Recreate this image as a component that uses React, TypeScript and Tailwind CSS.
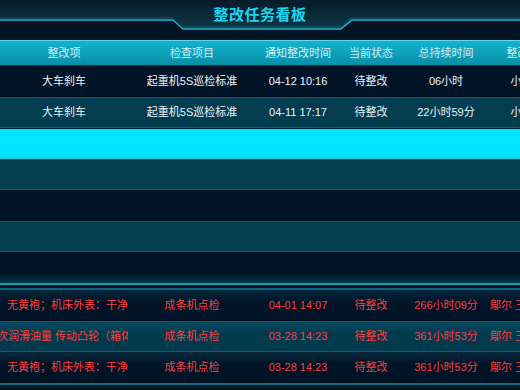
import React from "react";

type Row = string[];

const cols = "grid grid-cols-[128px_128px_84px_62px_88px_88px] w-[578px]";

const headers: Row = ["整改项", "检查项目", "通知整改时间", "当前状态", "总持续时间", "整改责任人"];

const topRows: Row[] = [
  ["大车刹车", "起重机5S巡检标准", "04-12 10:16", "待整改", "06小时", "小李 小王"],
  ["大车刹车", "起重机5S巡检标准", "04-11 17:17", "待整改", "22小时59分", "小李 小王"],
];

const alarmRows: Row[] = [
  ["无黄袍；机床外表：干净.", "成条机点检", "04-01 14:07", "待整改", "266小时09分", "鄔尔 王天明 李建国 张伟"],
  ["次润滑油量 传动凸轮（箱体", "成条机点检", "03-28 14:23", "待整改", "361小时53分", "鄔尔 王天明 李建国 张伟"],
  ["无黄袍；机床外表：干净.", "成条机点检", "03-28 14:23", "待整改", "361小时53分", "鄔尔 王天明 李建国 张伟"],
];

// dark / teal stripes used by the board
const dark = "bg-[#011427] border-b border-[#000c1a]";
const teal = "bg-[#023d50] border-y border-[#0b6073]";

const Cells = ({ row, red, shift }: { row: Row; red?: boolean; shift?: boolean }) => (
  <>
    {row.map((c, i) => (
      <div
        key={i}
        className={
          "flex items-center overflow-hidden whitespace-nowrap " +
          (i === 0 && red ? "justify-start pl-[7px] " : i === 5 && red ? "justify-start " : "justify-center ") +
          (red ? "text-[#ff3d3d]" : "text-[#eef4f6]")
        }
      >
        <span className={i === 0 && shift ? "-ml-[10px]" : ""}>{c}</span>
      </div>
    ))}
  </>
);

export default function App() {
  return (
    <div className="w-[520px] h-[390px] overflow-hidden bg-[#021424] text-[11px] font-['Liberation_Sans','Noto_Sans_CJK_SC',sans-serif]">
      {/* title bar */}
      <div className="relative h-[30px] flex items-center justify-center">
        <svg className="absolute inset-0" width="520" height="30" viewBox="0 0 520 30">
          <defs>
            <linearGradient id="tg" x1="0" y1="0" x2="0" y2="1">
              <stop offset="0" stopColor="#061b28" />
              <stop offset="1" stopColor="#0e3747" />
            </linearGradient>
          </defs>
          <polygon points="0,0 520,0 520,20 352,20 341,29 183,29 173,20 0,20" fill="url(#tg)" />
          <polyline
            points="0,20 173,20 183,29 341,29 352,20 520,20"
            fill="none"
            stroke="#1db3cf"
            strokeWidth="1.6"
          />
          <polyline
            points="0,18 172,18 182,27 342,27 351,18 520,18"
            fill="none"
            stroke="#0e5a6c"
            strokeWidth="1"
          />
        </svg>
        <span className="relative -mt-[2px] text-[15px] font-bold tracking-[0.5px] text-[#1bd6f3] font-['Noto_Sans_CJK_SC',sans-serif]">
          整改任务看板
        </span>
      </div>

      <div className="h-[10px]" />

      {/* column headers */}
      <div className={cols + " h-[26px] bg-gradient-to-b from-[#14b3ce] to-[#0a8ea8] border-t border-[#5fd8ec] border-b border-b-[#05374a] text-[#d4eef3]"}>
        {headers.map((h) => (
          <div key={h} className="flex items-center justify-center whitespace-nowrap">
            {h}
          </div>
        ))}
      </div>

      {/* main rows */}
      <div className={cols + " h-[31px] " + dark}>
        <Cells row={topRows[0]} />
      </div>
      <div className={cols + " h-[31px] " + teal}>
        <Cells row={topRows[1]} />
      </div>
      <div className={cols + " h-[31px] bg-[#00e4ff] border-t border-[#00283a] border-b-2 border-b-[#2ac6dc]"} />
      <div className={"h-[31px] w-[520px] " + teal} />
      <div className={"h-[31px] w-[520px] " + dark} />
      <div className={"h-[31px] w-[520px] " + teal} />
      <div className="h-[31px] w-[520px] bg-gradient-to-b from-[#011427] from-70% to-[#0a3a4c]" />

      {/* divider */}
      <div className="h-[7px] w-[520px] bg-[#02121f] border-t-2 border-[#0f9fb8] border-b-2 border-b-[#0a667b]" />

      {/* overdue rows */}
      <div className={cols + " h-[31px] bg-gradient-to-b from-[#06283a] to-[#011427] to-40% border-b border-[#000c1a]"}>
        <Cells row={alarmRows[0]} red />
      </div>
      <div className={cols + " h-[31px] bg-gradient-to-b from-[#064a5e] to-[#023a4d] to-40% border-y border-[#0b6073]"}>
        <Cells row={alarmRows[1]} red shift />
      </div>
      <div className={cols + " h-[31px] bg-gradient-to-b from-[#06283a] to-[#011427] to-40% border-b border-[#000c1a]"}>
        <Cells row={alarmRows[2]} red />
      </div>
      <div className="h-[7px] w-[520px] bg-[#021522] border-t-2 border-[#0a6f85]" />
    </div>
  );
}
